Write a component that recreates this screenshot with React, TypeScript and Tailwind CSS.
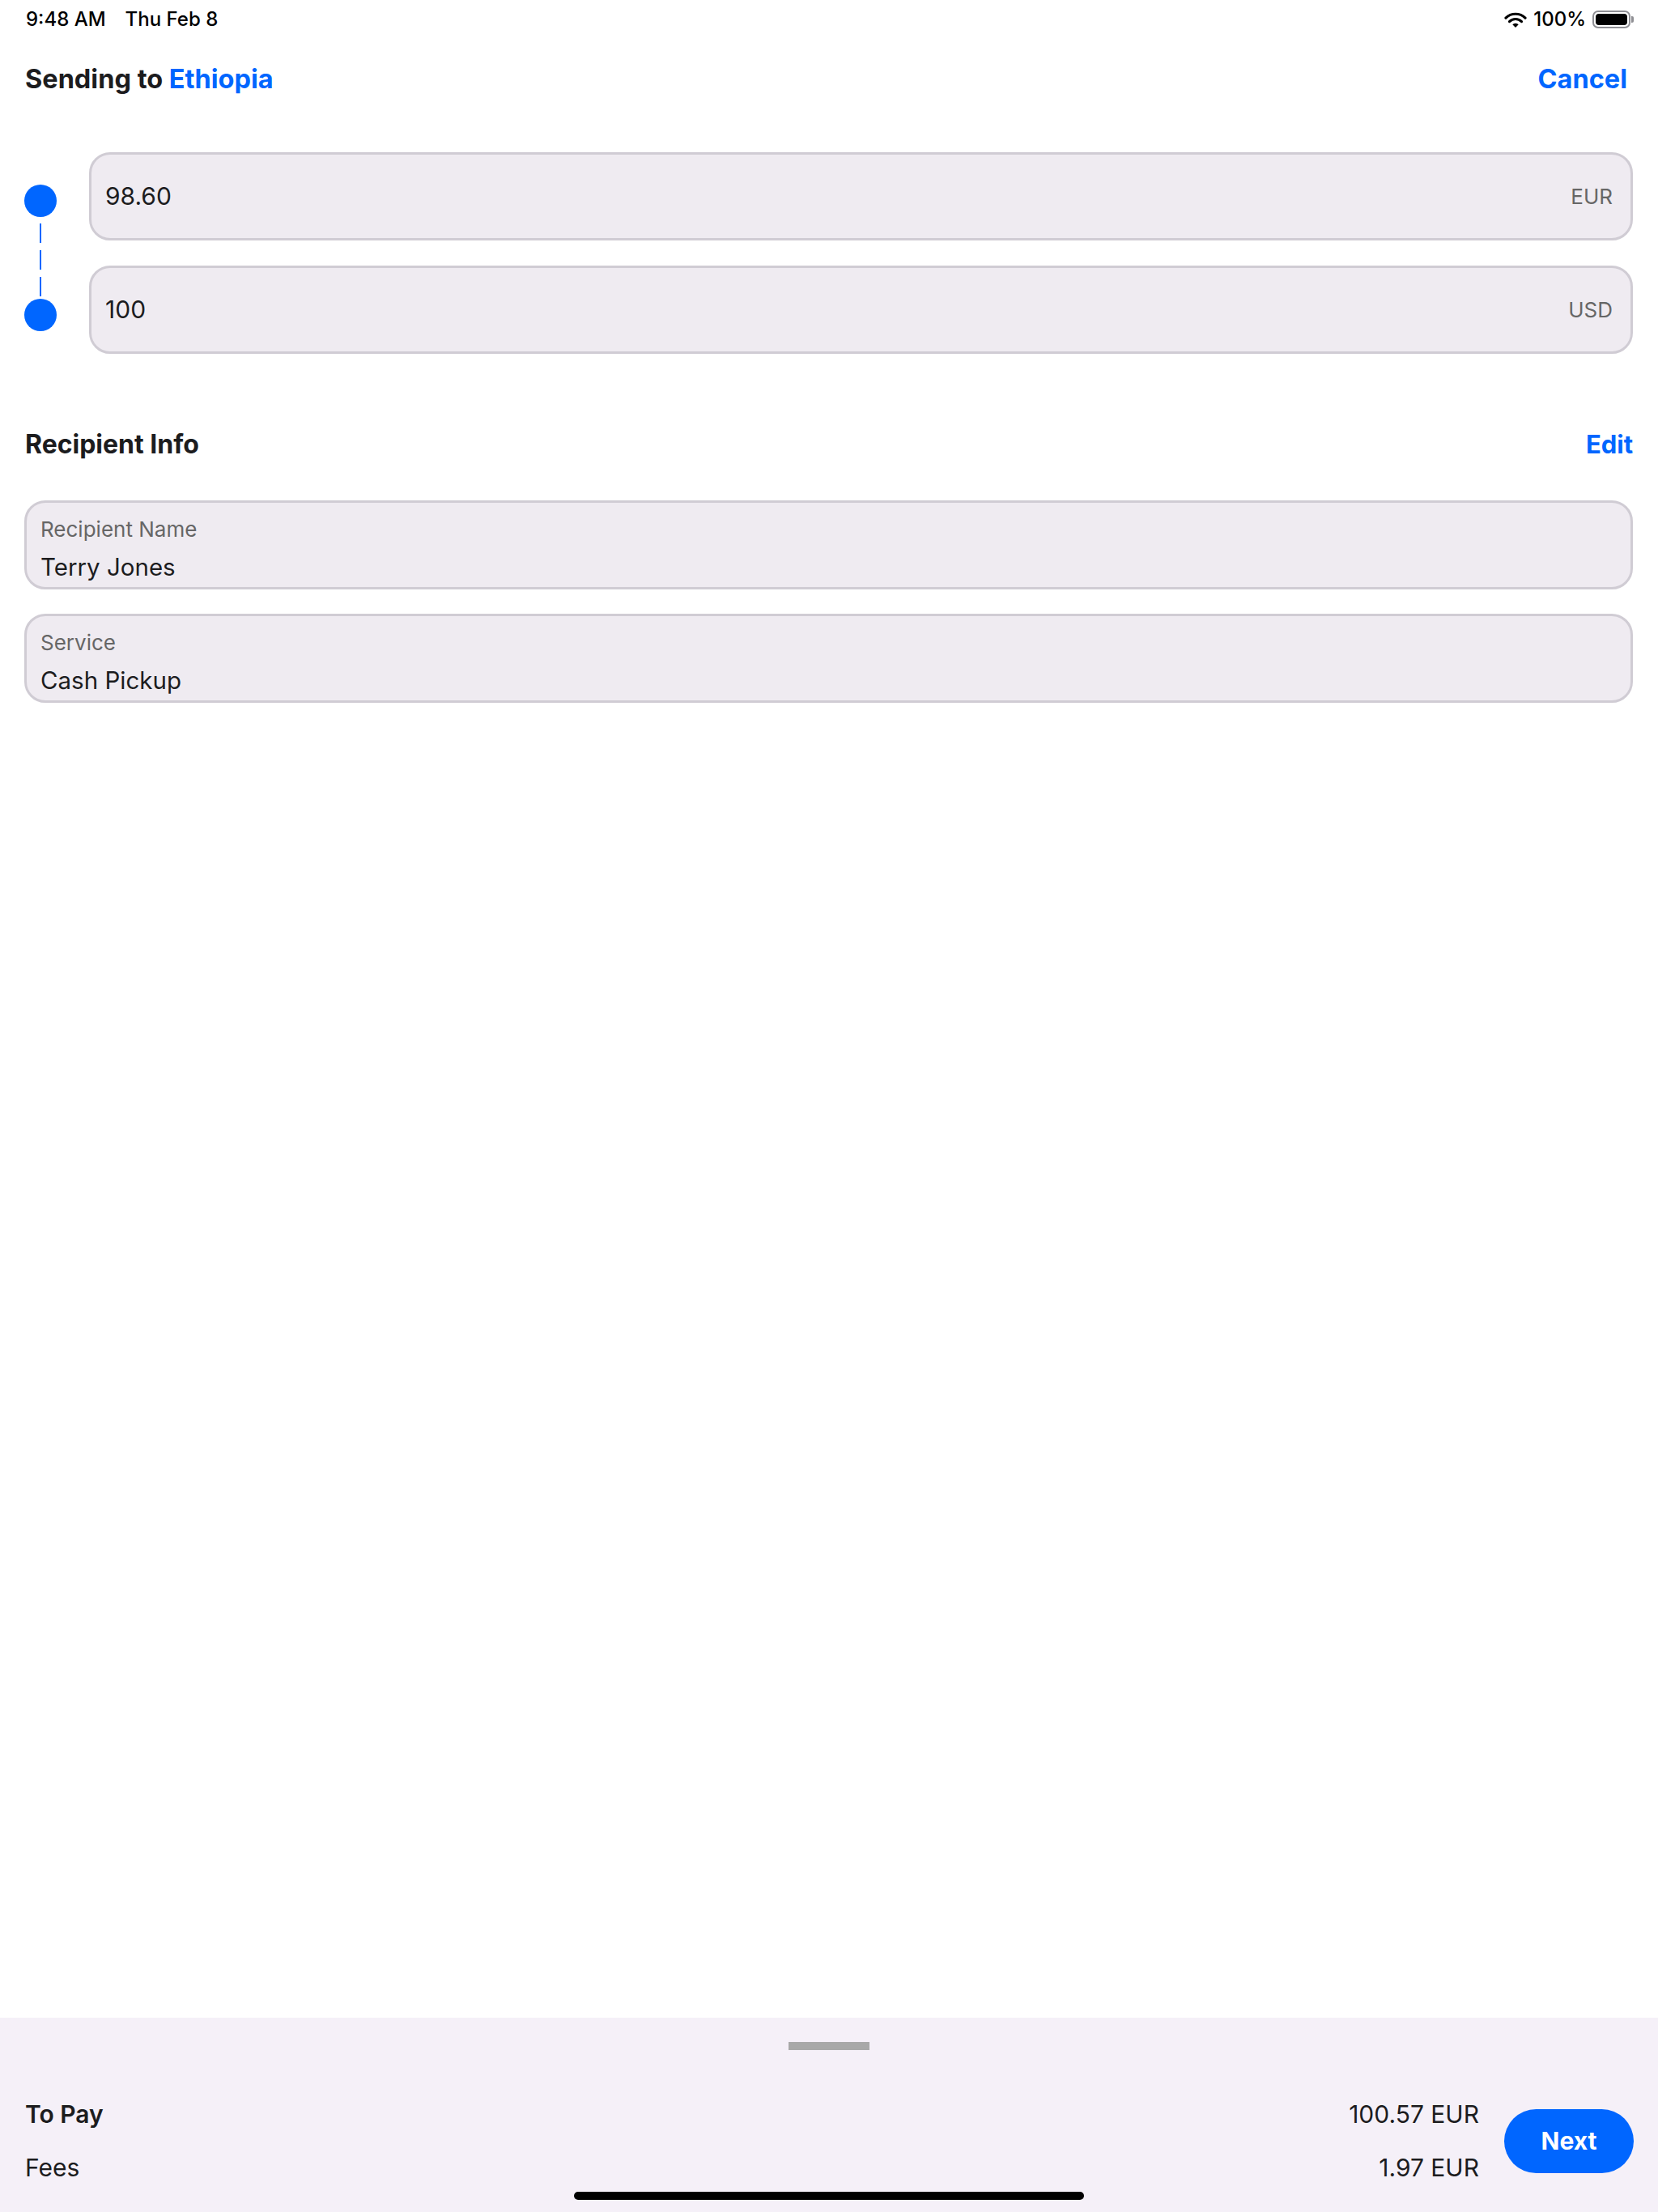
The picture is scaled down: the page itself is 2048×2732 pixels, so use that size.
const BLUE = "text-[#0066ff]";

const Wifi = () => (
  <svg width="28" height="20" viewBox="0 0 27 20" className="mt-[2px]">
    <path d="M1.5 7.2 A17 17 0 0 1 25.5 7.2" fill="none" stroke="#000" strokeWidth="3.2" strokeLinecap="round" />
    <path d="M6 11.6 A10.6 10.6 0 0 1 21 11.6" fill="none" stroke="#000" strokeWidth="3.2" strokeLinecap="round" />
    <path d="M13.5 19 L9.8 15.3 A5.3 5.3 0 0 1 17.2 15.3 Z" fill="#000" />
  </svg>
);

const Battery = () => (
  <div className="flex items-center">
    <div className="w-[47px] h-[22px] rounded-[7px] border-2 border-[#8e8e93] p-[2px]">
      <div className="w-full h-full rounded-[4px] bg-black" />
    </div>
    <div className="w-[3px] h-[8px] rounded-r-[2px] bg-[#8e8e93] ml-[1px]" />
  </div>
);

const StatusBar = () => (
  <div className="h-[46px] pt-[9px] pl-[32px] pr-[30px] flex justify-between items-start text-[24px] leading-[29px] font-medium text-black">
    <div className="flex gap-[24px]">
      <span>9:48 AM</span>
      <span>Thu Feb 8</span>
    </div>
    <div className="flex items-center gap-[8px]">
      <Wifi />
      <span>100%</span>
      <Battery />
    </div>
  </div>
);

const AmountField = ({ value, currency }: { value: string; currency: string }) => (
  <div className="h-[109px] flex items-center justify-between rounded-[26px] border-[3px] border-[#d0ccd4] bg-[#efebf1] pl-[17px] pr-[22px]">
    <span className="text-[30px] text-[#1c1c1e]">{value}</span>
    <span className="text-[26px] text-[#666666]">{currency}</span>
  </div>
);

const InfoField = ({ label, value }: { label: string; value: string }) => (
  <div className="h-[110px] flex flex-col rounded-[26px] border-[3px] border-[#d0ccd4] bg-[#efebf1] pl-[17px] pt-[18px]">
    <span className="text-[26px] leading-[30px] text-[#666666]">{label}</span>
    <span className="mt-[13px] text-[29.5px] leading-[36px] text-[#1c1c1e]">{value}</span>
  </div>
);

const Dot = () => <div className="w-[40px] h-[40px] rounded-full bg-[#0066ff]" />;

export default function App() {
  return (
    <div className="relative w-[2048px] h-[2732px] flex flex-col bg-white font-['Inter','Noto_Sans',sans-serif]">
      <StatusBar />

      <div className="flex-1 flex flex-col">
        <div className="mt-[32px] h-[40px] pl-[31px] pr-[38px] flex items-center justify-between text-[32.5px] font-bold">
          <span className="text-[#1c1c1e]">
            Sending to <span className={BLUE}>Ethiopia</span>
          </span>
          <button className={BLUE}>Cancel</button>
        </div>

        <div className="mt-[70px] pl-[30px] pr-[31px] flex gap-[40px]">
          <div className="w-[40px] flex flex-col items-center pt-[40px]">
            <Dot />
            <svg width="2" height="90" className="mt-[8px]">
              <line x1="1" y1="0" x2="1" y2="90" stroke="#0066ff" strokeWidth="2.5" strokeDasharray="24 9" />
            </svg>
            <div className="mt-[3px]">
              <Dot />
            </div>
          </div>
          <div className="flex-1 flex flex-col gap-[31px]">
            <AmountField value="98.60" currency="EUR" />
            <AmountField value="100" currency="USD" />
          </div>
        </div>

        <div className="mt-[92px] h-[40px] pl-[31px] pr-[31px] flex items-center justify-between font-bold">
          <span className="text-[32px] text-[#1c1c1e]">Recipient Info</span>
          <button className={`text-[31px] ${BLUE}`}>Edit</button>
        </div>

        <div className="mt-[49px] pl-[30px] pr-[31px] flex flex-col gap-[30px]">
          <InfoField label="Recipient Name" value="Terry Jones" />
          <InfoField label="Service" value="Cash Pickup" />
        </div>
      </div>

      <div className="h-[240px] bg-[#f5f0f8] flex flex-col">
        <div className="mt-[30px] mx-auto w-[100px] h-[10px] bg-[#a8a8a8]" />
        <div className="mt-[60px] pl-[31px] pr-[30px] flex items-center">
          <div className="flex-1 flex flex-col gap-[28px] text-[#1c1c1e]">
            <span className="text-[30px] leading-[38px] font-semibold">To Pay</span>
            <span className="text-[30px] leading-[38px]">Fees</span>
          </div>
          <div className="flex flex-col gap-[28px] items-end text-[30px] leading-[38px] text-[#1c1c1e]">
            <span>100.57 EUR</span>
            <span>1.97 EUR</span>
          </div>
          <button className="ml-[31px] w-[160px] h-[79px] rounded-full bg-[#0066ff] text-white text-[30px] font-bold">
            Next
          </button>
        </div>
      </div>

      <div className="absolute bottom-[15px] left-[709px] w-[630px] h-[10px] rounded-full bg-black" />
    </div>
  );
}
